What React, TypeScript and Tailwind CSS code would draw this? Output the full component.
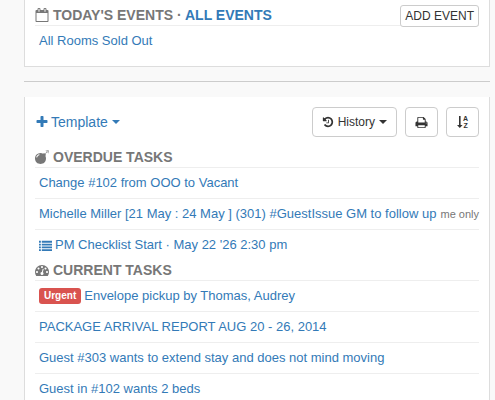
import type { ReactNode } from 'react';

interface Task {
  id: number;
  title: string;
  urgent?: boolean;
  checklist?: boolean;
  note?: string;
}

const overdueTasks: Task[] = [
  { id: 1, title: 'Change #102 from OOO to Vacant' },
  { id: 2, title: 'Michelle Miller [21 May : 24 May ] (301) #GuestIssue GM to follow up', note: 'me only' },
  { id: 3, title: "PM Checklist Start · May 22 '26 2:30 pm", checklist: true },
];

const currentTasks: Task[] = [
  { id: 4, title: 'Envelope pickup by Thomas, Audrey', urgent: true },
  { id: 5, title: 'PACKAGE ARRIVAL REPORT AUG 20 - 26, 2014' },
  { id: 6, title: 'Guest #303 wants to extend stay and does not mind moving' },
  { id: 7, title: 'Guest in #102 wants 2 beds' },
];

const icons = {
  calendar:
    'M192 1664h1408v-1024h-1408v1024zm384-1216v-288q0-14-9-23t-23-9h-64q-14 0-23 9t-9 23v288q0 14 9 23t23 9h64q14 0 23-9t9-23zm768 0v-288q0-14-9-23t-23-9h-64q-14 0-23 9t-9 23v288q0 14 9 23t23 9h64q14 0 23-9t9-23zm384-64v1280q0 52-38 90t-90 38h-1408q-52 0-90-38t-38-90v-1280q0-52 38-90t90-38h128v-96q0-66 47-113t113-47h64q66 0 113 47t47 113v96h384v-96q0-66 47-113t113-47h64q66 0 113 47t47 113v96h128q52 0 90 38t38 90z',
  plus: 'M1600 736v192q0 40-28 68t-68 28h-416v416q0 40-28 68t-68 28h-192q-40 0-68-28t-28-68v-416h-416q-40 0-68-28t-28-68v-192q0-40 28-68t68-28h416v-416q0-40 28-68t68-28h192q40 0 68 28t28 68v416h416q40 0 68 28t28 68z',
  history:
    'M1664 896q0 156-61 298t-164 245-245 164-298 61q-172 0-327-72.5t-264-204.5q-7-10-6.5-22.5t8.5-20.5l137-138q10-9 25-9 16 2 23 12 73 95 179 147t225 52q104 0 198.5-40.5t163.5-109.5 109.5-163.5 40.5-198.5-40.5-198.5-109.5-163.5-163.5-109.5-198.5-40.5q-98 0-188 35.5t-160 101.5l137 138q31 30 14 69-17 40-59 40h-448q-26 0-45-19t-19-45v-448q0-42 40-59 39-17 69 14l130 129q107-101 244.5-156.5t284.5-55.5q156 0 298 61t245 164 164 245 61 298zm-640-288v448q0 14-9 23t-23 9h-320q-14 0-23-9t-9-23v-64q0-14 9-23t23-9h224v-352q0-14 9-23t23-9h64q14 0 23 9t9 23z',
  print:
    'M448 1536h896v-256h-896v256zm0-640h896v-384h-160q-40 0-68-28t-28-68v-160h-640v640zm1152 64q0-26-19-45t-45-19-45 19-19 45 19 45 45 19 45-19 19-45zm128 0v416q0 13-9.5 22.5t-22.5 9.5h-224v160q0 40-28 68t-68 28h-960q-40 0-68-28t-28-68v-160h-224q-13 0-22.5-9.5t-9.5-22.5v-416q0-79 56.5-135.5t135.5-56.5h64v-544q0-40 28-68t68-28h672q40 0 88 20t76 48l152 152q28 28 48 76t20 88v256h64q79 0 135.5 56.5t56.5 135.5z',
  bomb: 'M571 589q-10-25-34-35t-49 0q-108 44-191 127t-127 191q-10 25 0 49t35 34q13 5 24 5 42 0 60-40 34-84 98.5-148.5t148.5-98.5q25-11 35-35t0-49zm942-356l46 46-244 243 68 68q19 19 19 45.5t-19 45.5l-64 64q89 161 89 343 0 143-55.5 273.5t-150 225-225 150-273.5 55.5-273.5-55.5-225-150-150-225-55.5-273.5 55.5-273.5 150-225 225-150 273.5-55.5q182 0 343 89l64-64q19-19 45.5-19t45.5 19l68 68zm8-56q-10 10-22 10-13 0-23-10l-91-90q-9-10-9-23t9-23q10-9 23-9t23 9l90 91q10 9 10 22.5t-10 22.5zm230 230q-11 9-23 9t-23-9l-90-91q-10-9-10-22.5t10-22.5q9-10 22.5-10t22.5 10l91 90q9 10 9 23t-9 23zm41-183q0 14-9 23t-23 9h-96q-14 0-23-9t-9-23 9-23 23-9h96q14 0 23 9t9 23zm-192-192v96q0 14-9 23t-23 9-23-9-9-23v-96q0-14 9-23t23-9 23 9 9 23zm151 55l-91 90q-10 10-22 10-13 0-23-10-10-9-10-22.5t10-22.5l90-91q10-9 23-9t23 9q9 10 9 23t-9 23z',
  gauge:
    'M384 1152q0-53-37.5-90.5t-90.5-37.5-90.5 37.5-37.5 90.5 37.5 90.5 90.5 37.5 90.5-37.5 37.5-90.5zm192-448q0-53-37.5-90.5t-90.5-37.5-90.5 37.5-37.5 90.5 37.5 90.5 90.5 37.5 90.5-37.5 37.5-90.5zm428 481l101-382q6-26-7.5-48.5t-38.5-29.5-48 6.5-30 39.5l-101 382q-60 5-107 43.5t-63 98.5q-20 77 20 146t117 89 146-20 89-117q16-60-6-117t-72-91zm660-33q0-53-37.5-90.5t-90.5-37.5-90.5 37.5-37.5 90.5 37.5 90.5 90.5 37.5 90.5-37.5 37.5-90.5zm-640-640q0-53-37.5-90.5t-90.5-37.5-90.5 37.5-37.5 90.5 37.5 90.5 90.5 37.5 90.5-37.5 37.5-90.5zm448 192q0-53-37.5-90.5t-90.5-37.5-90.5 37.5-37.5 90.5 37.5 90.5 90.5 37.5 90.5-37.5 37.5-90.5zm320 448q0 261-141 483-19 29-54 29h-1402q-35 0-54-29-141-221-141-483 0-182 71-348t191-286 286-191 348-71 348 71 286 191 191 286 71 348z',
  list: 'M0 256h256v256h-256zM384 256h1408v256h-1408zM0 640h256v256h-256zM384 640h1408v256h-1408zM0 1024h256v256h-256zM384 1024h1408v256h-1408zM0 1408h256v256h-256zM384 1408h1408v256h-1408z',
};

function Icon({ name, className }: { name: keyof typeof icons; className: string }) {
  return (
    <svg viewBox="0 0 1792 1792" fill="currentColor" aria-hidden="true" className={`shrink-0 ${className}`}>
      <path d={icons[name]} />
    </svg>
  );
}

function SortIcon() {
  return (
    <svg viewBox="0 0 12 14" fill="currentColor" aria-hidden="true" className="h-[14px] w-3 shrink-0">
      <path d="M2 1h1.6v9h2L2.8 13 0 10h2z" />
      <text x="6" y="6" fontSize="7" fontWeight="bold">A</text>
      <text x="6.4" y="13" fontSize="7" fontWeight="bold">Z</text>
    </svg>
  );
}

function Caret() {
  return (
    <svg viewBox="0 0 8 4" fill="currentColor" aria-hidden="true" className="h-1 w-2 shrink-0">
      <path d="M0 0h8L4 4z" />
    </svg>
  );
}

function SectionHeading({ icon, children }: { icon: ReactNode; children: ReactNode }) {
  return (
    <h2 className="flex h-5 items-center gap-1 border-b border-[#eee] pb-0.5 text-sm font-bold text-[#777]">
      {icon}
      <span>{children}</span>
    </h2>
  );
}

function TaskList({ tasks }: { tasks: Task[] }) {
  return (
    <ul>
      {tasks.map((task) => (
        <li
          key={task.id}
          className="flex h-[31px] items-center justify-between border-b border-[#eee] pl-1 last:border-transparent"
        >
          <a href="#" className="flex items-center gap-[3px] whitespace-nowrap text-[#337ab7]">
            {task.urgent && (
              <span className="rounded-[3px] bg-[#d9534f] px-[5px] text-[10px] leading-4 font-bold text-white">Urgent</span>
            )}
            {task.checklist && <Icon name="list" className="size-[13px]" />}
            {task.title}
          </a>
          {task.note && <span className="text-[11px] whitespace-nowrap text-[#777]">{task.note}</span>}
        </li>
      ))}
    </ul>
  );
}

const buttonClass =
  'flex h-[30px] items-center justify-center gap-1 rounded-[4px] border border-[#ccc] bg-white text-xs text-[#333]';

export default function App() {
  return (
    <main className="h-screen overflow-hidden bg-[#f9f9f9] pr-[5px] pl-6 font-['Liberation_Sans',Arial,sans-serif] text-[13px]">
      {/* Events */}
      <section className="border-x border-b border-[#ddd] bg-white px-[10px] pt-[6px] pb-[9px]">
        <div className="relative">
          <SectionHeading icon={<Icon name="calendar" className="size-[14px]" />}>
            TODAY'S EVENTS · <a href="#" className="text-[#337ab7]">ALL EVENTS</a>
          </SectionHeading>
          <button type="button" className="absolute -top-px right-0 h-[22px] rounded-[3px] border border-[#ccc] bg-white px-1 text-xs text-[#333]">
            ADD EVENT
          </button>
        </div>
        <TaskList tasks={[{ id: 0, title: 'All Rooms Sold Out' }]} />
      </section>

      <hr className="mt-[14px] mb-[15px] border-[#ccc]" />

      {/* Tasks */}
      <section className="border-x border-[#ddd] bg-white px-[10px] pt-[10px] pb-5">
        <div className="mb-[11px] flex items-center justify-between">
          <button type="button" className="flex items-center gap-1 text-sm text-[#337ab7]">
            <span className="flex items-center gap-0.5">
              <Icon name="plus" className="size-[14px]" />
              Template
            </span>
            <Caret />
          </button>
          <div className="flex gap-2">
            <button type="button" className={`${buttonClass} px-[9px]`}>
              <Icon name="history" className="size-3" />
              History
              <Caret />
            </button>
            <button type="button" aria-label="Print" className={`${buttonClass} w-[33px]`}>
              <Icon name="print" className="size-[13px]" />
            </button>
            <button type="button" aria-label="Sort alphabetically" className={`${buttonClass} w-[33px]`}>
              <SortIcon />
            </button>
          </div>
        </div>

        <SectionHeading icon={<Icon name="bomb" className="size-[14px]" />}>OVERDUE TASKS</SectionHeading>
        <TaskList tasks={overdueTasks} />
        <SectionHeading icon={<Icon name="gauge" className="size-[14px]" />}>CURRENT TASKS</SectionHeading>
        <TaskList tasks={currentTasks} />
      </section>
    </main>
  );
}
